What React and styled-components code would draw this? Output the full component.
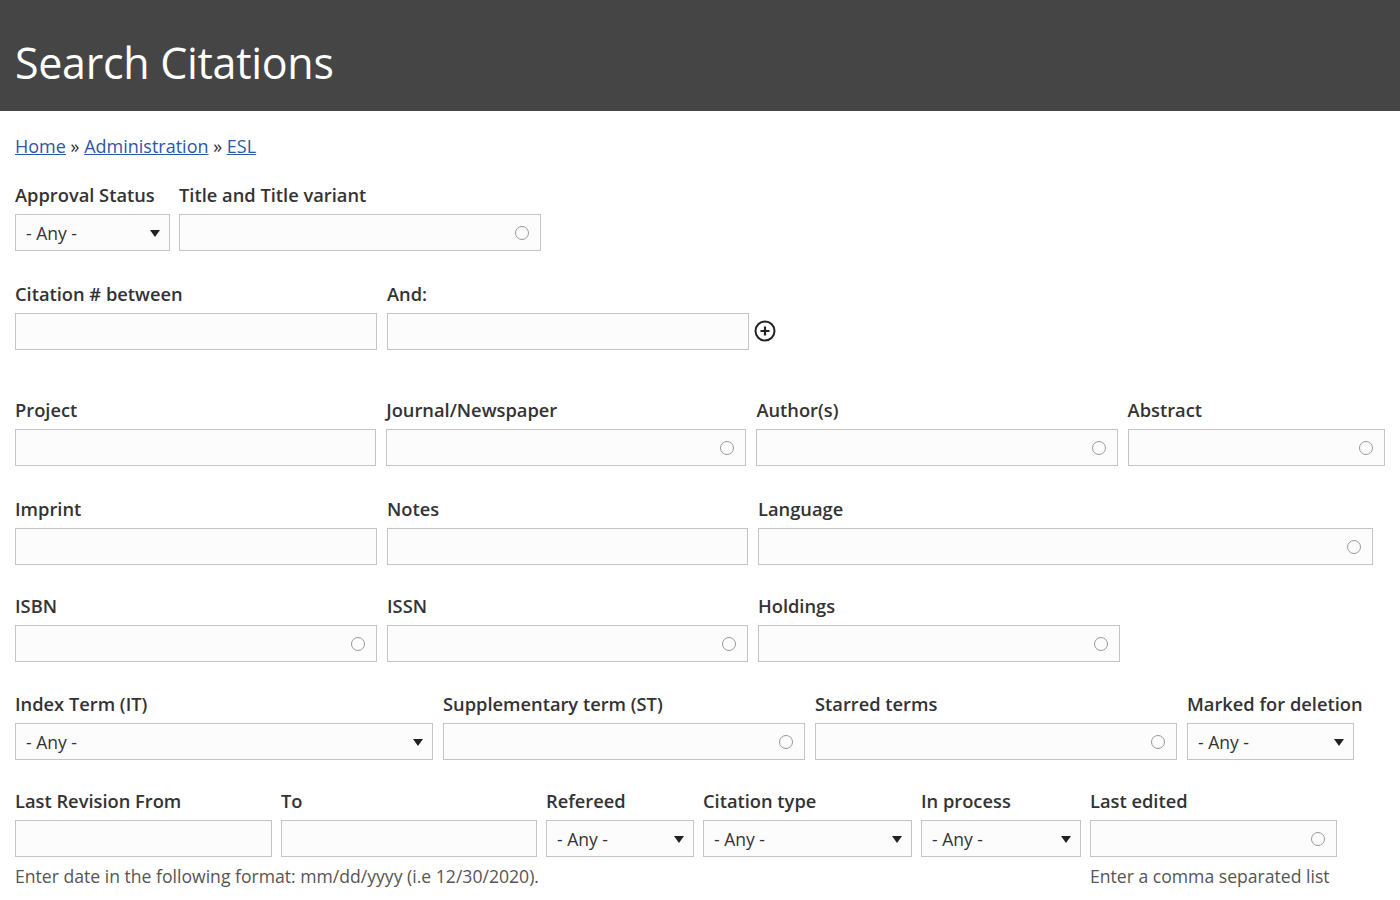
import React from "react";
import styled, { createGlobalStyle } from "styled-components";

const G = createGlobalStyle`
  body{margin:0;background:#fff;font-family:"Open Sans","Noto Sans",sans-serif;color:#333;}
`;
const Header = styled.div`
  height:111px;background:#454545;display:flex;align-items:center;padding:14px 15px 0;box-sizing:border-box;
  h1{margin:0;color:#fff;font-weight:400;font-size:43px;letter-spacing:-0.3px;}
`;
const Main = styled.div`padding:0 15px;`;
const Crumb = styled.div`
  margin-top:23px;font-size:18px;color:#333;height:25px;
  a{color:#2b57a8;text-decoration:underline;}
`;
const Row = styled.div`display:flex;gap:${p=>p.$gap||9}px;align-items:flex-start;margin-top:${p=>p.$mt}px;`;
const Field = styled.div`display:flex;flex-direction:column;width:${p=>p.$w}px;`;
const Label = styled.div`font-size:18.3px;font-weight:600;height:24px;line-height:24px;margin-bottom:7px;white-space:nowrap;color:#333;`;
const Box = styled.div`
  position:relative;height:37px;box-sizing:border-box;border:1px solid #c4c4c4;background:#fcfcfc;
  display:flex;align-items:center;padding:0 10px;font-size:17.5px;color:#333;
`;
const Circle = styled.span`
  position:absolute;right:11px;top:50%;width:12px;height:12px;margin-top:-7px;border:1.5px solid #999;border-radius:50%;
`;
const Tri = styled.span`
  position:absolute;right:9px;top:50%;margin-top:-3px;border-left:5.5px solid transparent;border-right:5.5px solid transparent;border-top:7px solid #222;
`;
const Help = styled.div`font-size:17.6px;color:#555;margin-top:7px;white-space:nowrap;`;
const Plus = styled.div`align-self:flex-start;margin-top:37px;margin-left:-6px;`;

const Input = ({w,label,auto,help}) => (
  <Field $w={w}><Label>{label}</Label><Box>{auto && <Circle/>}</Box>{help && <Help>{help}</Help>}</Field>
);
const Select = ({w,label}) => (
  <Field $w={w}><Label>{label}</Label><Box>- Any -<Tri/></Box></Field>
);

export default function App(){
  return (<>
    <G/>
    <Header><h1>Search Citations</h1></Header>
    <Main>
      <Crumb><a>Home</a> » <a>Administration</a> » <a>ESL</a></Crumb>
      <Row $mt={24}>
        <Select w={155} label="Approval Status"/>
        <Input w={362} label="Title and Title variant" auto/>
      </Row>
      <Row $mt={31} $gap={10}>
        <Input w={362} label="Citation # between"/>
        <Input w={362} label="And:"/>
        <Plus>
          <svg width="24" height="24" viewBox="0 0 24 24"><circle cx="12" cy="12" r="9.5" fill="none" stroke="#222" strokeWidth="2"/><path d="M12 7.5v9M7.5 12h9" stroke="#222" strokeWidth="2.2"/></svg>
        </Plus>
      </Row>
      <Row $mt={48} $gap={10}>
        <Input w={362} label="Project"/>
        <Input w={361} label="Journal/Newspaper" auto/>
        <Input w={362} label="Author(s)" auto/>
        <Input w={258} label="Abstract" auto/>
      </Row>
      <Row $mt={31} $gap={10}>
        <Input w={362} label="Imprint"/>
        <Input w={361} label="Notes"/>
        <Input w={615} label="Language" auto/>
      </Row>
      <Row $mt={29} $gap={10}>
        <Input w={362} label="ISBN" auto/>
        <Input w={361} label="ISSN" auto/>
        <Input w={362} label="Holdings" auto/>
      </Row>
      <Row $mt={30} $gap={10}>
        <Select w={418} label="Index Term (IT)"/>
        <Input w={362} label="Supplementary term (ST)" auto/>
        <Input w={362} label="Starred terms" auto/>
        <Select w={167} label="Marked for deletion"/>
      </Row>
      <Row $mt={29}>
        <Input w={257} label="Last Revision From" help="Enter date in the following format: mm/dd/yyyy (i.e 12/30/2020)."/>
        <Input w={256} label="To"/>
        <Select w={148} label="Refereed"/>
        <Select w={209} label="Citation type"/>
        <Select w={160} label="In process"/>
        <Input w={247} label="Last edited" auto help="Enter a comma separated list"/>
      </Row>
    </Main>
  </>);
}
